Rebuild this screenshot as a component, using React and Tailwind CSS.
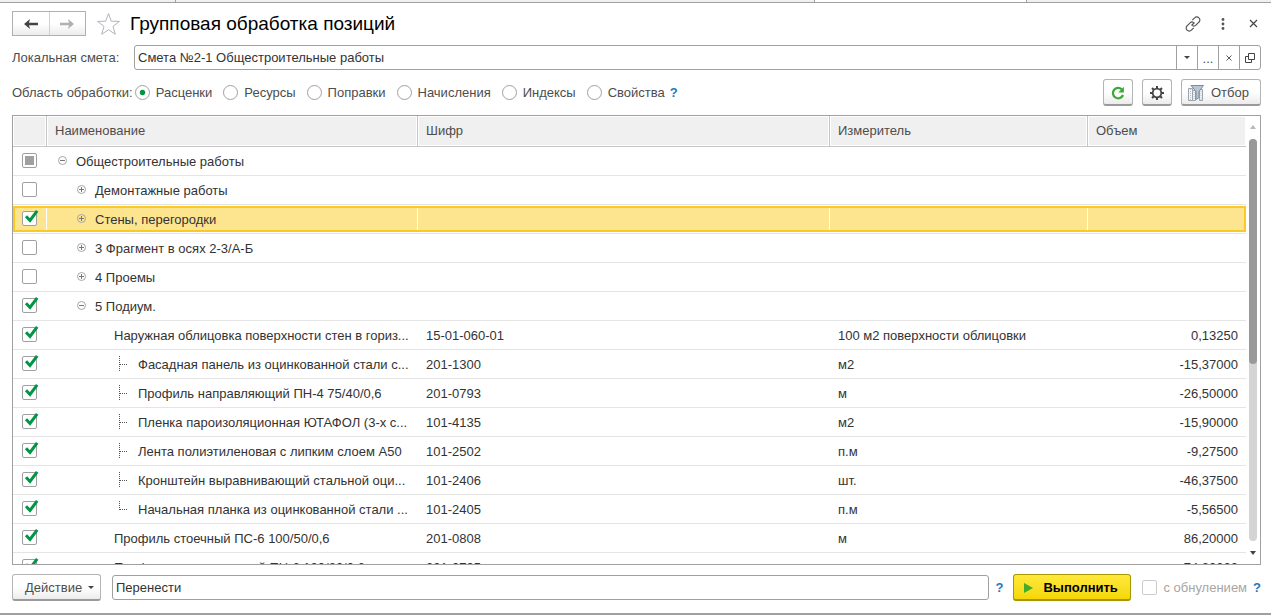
import React from "react";

const rows = [
  { state: "mixed", level: 0, toggle: "minus", name: "Общестроительные работы" },
  { state: "off", level: 1, toggle: "plus", name: "Демонтажные работы" },
  { state: "on", level: 1, toggle: "plus", name: "Стены, перегородки", selected: true },
  { state: "off", level: 1, toggle: "plus", name: "3 Фрагмент в осях 2-3/А-Б" },
  { state: "off", level: 1, toggle: "plus", name: "4 Проемы" },
  { state: "on", level: 1, toggle: "minus", name: "5 Подиум." },
  { state: "on", level: 2, name: "Наружная облицовка поверхности стен в гориз...", code: "15-01-060-01", unit: "100 м2 поверхности облицовки", volume: "0,13250" },
  { state: "on", level: 3, branch: "mid", name: "Фасадная панель из оцинкованной стали с...", code: "201-1300", unit: "м2", volume: "-15,37000" },
  { state: "on", level: 3, branch: "mid", name: "Профиль направляющий ПН-4 75/40/0,6", code: "201-0793", unit: "м", volume: "-26,50000" },
  { state: "on", level: 3, branch: "mid", name: "Пленка пароизоляционная ЮТАФОЛ (3-х с...", code: "101-4135", unit: "м2", volume: "-15,90000" },
  { state: "on", level: 3, branch: "mid", name: "Лента полиэтиленовая с липким слоем А50", code: "101-2502", unit: "п.м", volume: "-9,27500" },
  { state: "on", level: 3, branch: "mid", name: "Кронштейн выравнивающий стальной оци...", code: "101-2406", unit: "шт.", volume: "-46,37500" },
  { state: "on", level: 3, branch: "end", name: "Начальная планка из оцинкованной стали ...", code: "101-2405", unit: "п.м", volume: "-5,56500" },
  { state: "on", level: 2, name: "Профиль стоечный ПС-6 100/50/0,6", code: "201-0808", unit: "м", volume: "86,20000" },
  { state: "on", level: 2, name: "Профиль направляющий ПН-6 100/80/0,6", code: "201-0795", unit: "м", volume: "74,20000" },
];

const indents = ["pl-[10px]", "pl-[29px]", "pl-[67px]", "pl-[72px]"];
const scopes = ["Расценки", "Ресурсы", "Поправки", "Начисления", "Индексы", "Свойства"];

const raised =
  "flex items-center rounded-[3px] border border-[#b4b4b4] border-b-2 border-b-[#9a9a9a] bg-linear-to-b from-white from-50% to-[#ececec] pt-px";

function Check({ state, label }) {
  return (
    <span className="relative block size-[15px]">
      <input
        type="checkbox"
        aria-label={label}
        defaultChecked={state === "on"}
        className="block size-[15px] appearance-none rounded-[2px] border border-[#a0a0a0] bg-white"
      />
      <svg className="pointer-events-none absolute -top-1 left-0 h-5 w-[18px]" viewBox="0 0 18 20">
        {state === "on" && <path d="M4 9.300 8 13.500 15.200 3.800" fill="none" stroke="#009646" strokeWidth="3" />}
        {state === "mixed" && <rect x="3" y="7" width="9" height="9" fill="#a0a0a0" />}
      </svg>
    </span>
  );
}

function Toggle({ kind }) {
  return (
    <button type="button" aria-label={kind === "plus" ? "Развернуть" : "Свернуть"} className="mr-2 block size-[11px] shrink-0">
      <svg viewBox="0 0 11 11" className="block size-[11px]" fill="none">
        <circle cx="5.5" cy="4.500" r="4" stroke="#a6a6a6" />
        <path d="M3 4.500h5" stroke="#777" />
        {kind === "plus" && <path d="M5.5 2v5" stroke="#777" />}
      </svg>
    </button>
  );
}

function Branch({ kind }) {
  return (
    <svg viewBox="0 0 10 16" className="mr-[9px] h-4 w-[10px] shrink-0" fill="none" stroke="#555" strokeDasharray="1 1">
      <path d={kind === "mid" ? "M.5 0v16" : "M.5 0v9"} />
      <path d="M1 8.5h8" />
    </svg>
  );
}

function Row({ row }) {
  const sel = row.selected;
  const cell = sel
    ? "my-px flex h-[26px] items-center border-y-2 border-[#fbc926] bg-[#fde590]"
    : "my-px flex h-[26px] items-center";
  const sep = sel ? <span className="w-px self-stretch bg-white" /> : null;
  return (
    <tr>
      <td className="border-b border-[#e4e4e4] p-0">
        <div className={sel ? cell + " border-l-2 pl-[7px]" : cell + " pl-[9px]"}>
          <span className={sel ? "self-start pt-[3px]" : "self-start pt-[5px]"}>
            <Check state={row.state} label={row.name} />
          </span>
          <span className="flex-1" />
          {sep}
        </div>
      </td>
      <td className="border-b border-[#e4e4e4] p-0">
        <div className={cell}>
          <div className={"flex min-w-0 flex-1 items-center whitespace-nowrap " + indents[row.level]}>
            {row.toggle && <Toggle kind={row.toggle} />}
            {row.branch && <Branch kind={row.branch} />}
            <span className="pt-[2px]">{row.name}</span>
          </div>
          {sep}
        </div>
      </td>
      <td className="border-b border-[#e4e4e4] p-0">
        <div className={cell}>
          <span className="flex-1 pt-[2px] pl-2">{row.code}</span>
          {sep}
        </div>
      </td>
      <td className="border-b border-[#e4e4e4] p-0">
        <div className={cell}>
          <span className="flex-1 pt-[2px] pl-2">{row.unit}</span>
          {sep}
        </div>
      </td>
      <td className="border-b border-[#e4e4e4] p-0">
        <div className={sel ? cell + " border-r-2" : cell}>
          <span className="flex-1 pt-[2px] pr-2 text-right">{row.volume}</span>
        </div>
      </td>
    </tr>
  );
}

function Head({ children, last }) {
  return (
    <th className={"h-[31px] border-b border-[#c6c6c6] p-0 text-left font-normal " + (last ? "" : "border-r")}>
      <div className="m-px flex h-7 items-center bg-[#f0f0f0] pl-[7px]">{children}</div>
    </th>
  );
}

function Help() {
  return (
    <a href="#help" aria-label="Справка" className="text-[13px] font-bold text-[#1e78be]">?</a>
  );
}

export default function App() {
  const fieldBtn = "flex w-[21px] items-center justify-center border-l border-[#a0a0a0]";
  return (
    <div className="flex h-screen flex-col overflow-hidden border-b-2 border-[#a0a0a0] bg-white font-['Liberation_Sans',Arial,sans-serif] text-[13px] leading-4 text-[#4d4d4d]">
      <div className="flex h-[3px] shrink-0 border-b border-[#a0a0a0] bg-[#f0f0f0]">
        <span className="w-[176px] border-r border-[#a0a0a0]" />
        <span className="w-[639px] border-r border-[#a0a0a0]" />
        <span className="w-[212px] border-r border-[#a0a0a0] bg-white" />
      </div>

      <main className="flex min-h-0 flex-1 flex-col pt-2 pr-[10px] pb-3 pl-3">
        <header className="flex h-[25px] shrink-0 items-center">
          <div className="flex h-[25px] w-[74px] border border-[#b0b0b0] bg-linear-to-b from-white from-50% to-[#ececec]">
            <button type="button" aria-label="Назад" className="flex flex-1 items-center justify-center border-r border-[#d0d0d0]">
              <svg viewBox="0 0 14 10" className="h-[10px] w-[14px]" fill="#444">
                <path d="M0 5 6 0 5 3.7h9v2.6H5L6 10Z" />
              </svg>
            </button>
            <button type="button" aria-label="Вперед" className="flex flex-1 items-center justify-center">
              <svg viewBox="0 0 14 10" className="h-[10px] w-[14px]" fill="#b0b0b0">
                <path d="M14 5 8 0l1 3.7H0v2.6h9L8 10Z" />
              </svg>
            </button>
          </div>
          <button type="button" aria-label="В избранное" className="ml-[10px]">
            <svg viewBox="0 0 24 24" className="block size-6" fill="none" stroke="#b0b4bc" strokeWidth="1">
              <path d="m12.500 1.500 2.800 7.700 8.200.2-6.500 5 2.300 7.900-6.800-4.600-6.800 4.600L8 14.400l-6.500-5 8.200-.2Z" />
            </svg>
          </button>
          <h1 className="ml-[10px] text-[19px] leading-6 text-black">Групповая обработка позиций</h1>
          <div className="ml-auto flex items-center text-[#444]">
            <button type="button" aria-label="Ссылка" className="mr-[16px]">
              <svg viewBox="0 0 16 16" className="block size-4" fill="none" stroke="#555" strokeWidth="1.200">
                <path d="M7.300 4.200 9.600 1.900a2.900 2.900 0 0 1 4.300 0 2.900 2.900 0 0 1 0 4.300l-3 3c-1 1-2.500 1.100-3.600.2M8.700 11.800 6.400 14.100a2.900 2.900 0 0 1-4.300 0 2.900 2.900 0 0 1 0-4.300l3-3c1-1 2.500-1.100 3.600-.2" />
                <path d="M6.500 9.500l3-3" />
              </svg>
            </button>
            <button type="button" aria-label="Ещё" className="mr-[20px]">
              <svg viewBox="0 0 12 12" className="block size-3" fill="#555">
                <circle cx="6" cy="1.500" r="1.400" /><circle cx="6" cy="6" r="1.400" /><circle cx="6" cy="10.500" r="1.400" />
              </svg>
            </button>
            <button type="button" aria-label="Закрыть" className="mr-[3px]">
              <svg viewBox="0 0 9 9" className="block size-[9px]" stroke="#444" strokeWidth="1.200"><path d="m1 1 7 7M8 1 1 8" /></svg>
            </button>
          </div>
        </header>

        <div className="mt-[9px] flex h-[25px] shrink-0 items-center">
          <label htmlFor="estimate" className="w-[122px] shrink-0">Локальная смета:</label>
          <div className="flex h-[25px] min-w-0 flex-1 overflow-hidden rounded-[3px] border border-[#a0a0a0]">
            <input id="estimate" defaultValue="Смета №2-1 Общестроительные работы" className="min-w-0 flex-1 px-[3px] text-[#333] outline-none" />
            <button type="button" aria-label="Выбрать из списка" className={fieldBtn}>
              <svg viewBox="0 0 6 3" className="h-[3px] w-[6px]" fill="#444"><path d="M0 0h6L3 3Z" /></svg>
            </button>
            <button type="button" aria-label="Выбрать" className={fieldBtn + " pt-[2px]"}>...</button>
            <button type="button" aria-label="Очистить" className={fieldBtn}>
              <svg viewBox="0 0 6 6" className="size-[6px]" stroke="#555" strokeWidth="1"><path d="m.5.5 5 5M5.500.5l-5 5" /></svg>
            </button>
            <button type="button" aria-label="Открыть" className={fieldBtn}>
              <svg viewBox="0 0 10 10" className="size-[10px]" fill="none" stroke="#444"><path d="M3.500.5h6v6h-6ZM3.500 3.500h-3v6h6v-3" /></svg>
            </button>
          </div>
        </div>

        <div className="mt-[9px] flex h-[27px] shrink-0 items-center">
          <fieldset className="flex items-center">
            <legend className="float-left mr-[2px]">Область обработки:</legend>
            <div className="flex items-center gap-[11px]">
              {scopes.map((s, i) => (
                <label key={s} className="flex items-center gap-[6px]">
                  <input
                    type="radio"
                    name="scope"
                    defaultChecked={i === 0}
                    className="size-[15px] appearance-none rounded-full border border-[#a0a0a0] bg-white checked:bg-radial checked:from-[#009646] checked:from-25% checked:to-white checked:to-35%"
                  />
                  {s}
                </label>
              ))}
            </div>
          </fieldset>
          <span className="ml-[5px]"><Help /></span>
          <div className="ml-auto flex gap-[9px]">
            <button type="button" aria-label="Обновить" className={raised + " h-[27px] w-[30px] justify-center"}>
              <svg viewBox="0 0 14 14" className="size-[14px]" fill="none">
                <path d="M12 9A5.200 5.200 0 1 1 10.800 3.400" stroke="#3aaa35" strokeWidth="2.200" />
                <path d="M12.900.800v5.600H7.300Z" fill="#3aaa35" />
              </svg>
            </button>
            <button type="button" aria-label="Настройки" className={raised + " h-[27px] w-[30px] justify-center"}>
              <svg viewBox="0 0 14 14" className="size-[14px]" fill="none" stroke="#444">
                <circle cx="7" cy="7" r="4.300" strokeWidth="1.800" />
                <path d="M7 0v2.500M7 11.500V14M0 7h2.500M11.500 7H14M2 2l1.800 1.800M10.200 10.200 12 12M2 12l1.800-1.800M10.200 3.800 12 2" strokeWidth="2" />
              </svg>
            </button>
            <button type="button" className={raised + " h-[27px] w-20 gap-[7px] pl-[6px]"}>
              <svg viewBox="0 0 16 16" className="size-4" fill="none">
                <path d="M.5 3.500h4v12h-4ZM4.500 5.500h3v10h-3ZM11.500 4.500h3v11h-3Z" fill="#f2f4f6" stroke="#9aa5b0" />
                <path d="M2.500 4v11M6 7v8M13 6v9" stroke="#b9c2ca" strokeDasharray="1 1" />
                <path d="M3 .5h12.500L11 6.500v6l-3 2v-8Z" fill="#b9c5d0" stroke="#7e8d9b" />
              </svg>
              Отбор
            </button>
          </div>
        </div>

        <section className="mt-[9px] flex min-h-0 flex-1 overflow-hidden border border-[#a0a0a0]">
          <div className="min-w-0 flex-1 overflow-hidden">
            <table className="w-full table-fixed border-separate border-spacing-0 text-[#333]">
              <colgroup>
                <col className="w-[34px]" />
                <col className="w-[371px]" />
                <col className="w-[412px]" />
                <col className="w-[258px]" />
                <col />
              </colgroup>
              <thead className="text-[#4d4d4d]">
                <tr>
                  <Head />
                  <Head>Наименование</Head>
                  <Head>Шифр</Head>
                  <Head>Измеритель</Head>
                  <Head last>Объем</Head>
                </tr>
              </thead>
              <tbody>
                {rows.map((r) => <Row key={r.name} row={r} />)}
              </tbody>
            </table>
          </div>
          <div className="flex w-[14px] shrink-0 flex-col items-center py-[9px]">
            <svg viewBox="0 0 6 4" className="h-1 w-[6px] shrink-0" fill="#b8b8b8"><path d="M0 4h6L3 0Z" /></svg>
            <div className="mt-[10px] mb-[10px] w-2 flex-1 rounded-full bg-[#d4d4d4]">
              <div className="h-[56%] rounded-full bg-[#999]" />
            </div>
            <svg viewBox="0 0 6 4" className="h-1 w-[6px] shrink-0" fill="#444"><path d="M0 0h6L3 4Z" /></svg>
          </div>
        </section>

        <footer className="mt-[9px] flex h-[27px] shrink-0 items-center">
          <button type="button" className={raised + " h-[27px] w-[89px] shrink-0 gap-[6px] pl-3"}>
            Действие
            <svg viewBox="0 0 6 3" className="h-[3px] w-[6px]" fill="#444"><path d="M0 0h6L3 3Z" /></svg>
          </button>
          <input aria-label="Действие" defaultValue="Перенести" className="ml-[11px] h-[25px] min-w-0 flex-1 rounded-[3px] border border-[#a0a0a0] px-[3px] text-[#333] outline-none" />
          <span className="ml-[6px]"><Help /></span>
          <button type="button" className="ml-[10px] flex h-[27px] w-[118px] shrink-0 items-center gap-[10px] rounded-[3px] border border-b-2 border-[#a89600] bg-linear-to-b from-[#ffe838] to-[#f5d800] pt-px pl-[10px] font-bold text-black">
            <svg viewBox="0 0 9 10" className="h-[10px] w-[9px]" fill="#3fae2a"><path d="M0 0v10l9-5Z" /></svg>
            Выполнить
          </button>
          <label className="ml-[11px] flex shrink-0 items-center gap-[6px] text-[#a6a6a6]">
            <input type="checkbox" disabled className="size-[15px] appearance-none rounded-[2px] border border-[#ccc] bg-white" />
            с обнулением
          </label>
          <span className="ml-[6px]"><Help /></span>
        </footer>
      </main>
    </div>
  );
}
